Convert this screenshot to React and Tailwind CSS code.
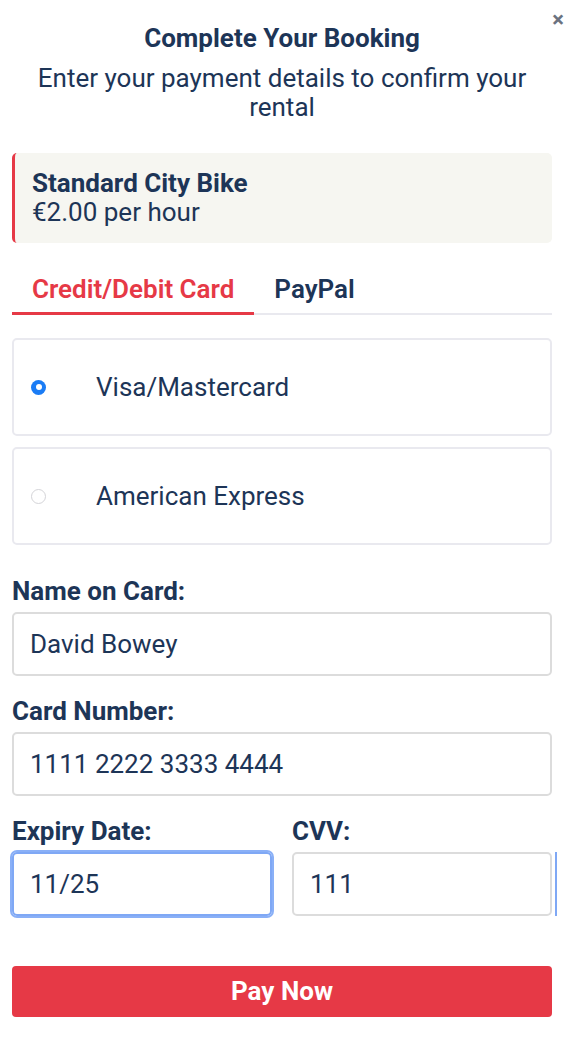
import React, { useState } from "react";

const navy = "text-[#1d3557]";

export default function App() {
  const [tab, setTab] = useState("card");
  const [method, setMethod] = useState("visa");

  return (
    <div className="relative min-h-[1044px] w-[578px] bg-white font-['Roboto',sans-serif] text-[#1d3557]">
      <button className="absolute right-[14px] top-[9px] text-[22px] font-bold leading-none text-[#6b7280]">
        ×
      </button>
      <div className="w-[564px] px-[12px] pt-[22px]">
        <h2 className="text-center text-[26px] font-bold leading-[32px]">Complete Your Booking</h2>
        <p className="mt-[10px] text-center text-[26px] leading-[29px]">
          Enter your payment details to confirm your rental
        </p>

        <div className="mt-[31px] rounded-[5px] border-l-[3px] border-[#e63946] bg-[#f6f6f1] px-[17px] py-[16px]">
          <p className="text-[26px] font-bold leading-[29px]">Standard City Bike</p>
          <p className="text-[26px] leading-[29px]">€2.00 per hour</p>
        </div>

        <div className="mt-[23px] flex border-b-2 border-[#e9e9ef]">
          <TabButton active={tab === "card"} onClick={() => setTab("card")}>
            Credit/Debit Card
          </TabButton>
          <TabButton active={tab === "paypal"} onClick={() => setTab("paypal")}>
            PayPal
          </TabButton>
        </div>

        <div className="mt-[23px] flex flex-col gap-[11px]">
          <Option label="Visa/Mastercard" checked={method === "visa"} onClick={() => setMethod("visa")} />
          <Option label="American Express" checked={method === "amex"} onClick={() => setMethod("amex")} />
        </div>

        <Field label="Name on Card:" value="David Bowey" className="mt-[32px]" />
        <Field label="Card Number:" value="1111 2222 3333 4444" className="mt-[21px]" />

        <div className="mt-[21px] flex gap-[20px]">
          <Field label="Expiry Date:" value="11/25" focused className="flex-1" />
          <div className="relative flex-1">
            <Field label="CVV:" value="111" />
            <span className="absolute bottom-0 right-[-5px] top-[35px] w-[2px] bg-[#7fa8f5]" />
          </div>
        </div>

        <button className="mt-[50px] h-[51px] w-full rounded-[4px] bg-[#e63946] text-[26px] font-bold text-white">
          Pay Now
        </button>
      </div>
    </div>
  );
}

function TabButton({ active, onClick, children }) {
  return (
    <button
      onClick={onClick}
      className={`-mb-[2px] border-b-[3px] px-[20px] pb-[8px] pt-[9px] text-[26px] font-semibold leading-[29px] ${
        active ? "border-[#e63946] text-[#e63946]" : "border-transparent text-[#1d3557]"
      }`}
    >
      {children}
    </button>
  );
}

function Option({ label, checked, onClick }) {
  return (
    <label
      onClick={onClick}
      className="flex h-[98px] cursor-pointer items-center rounded-[5px] border-2 border-[#e9e9ef] pl-[17px]"
    >
      <span
        className={`flex h-[15px] w-[15px] items-center justify-center rounded-full ${
          checked ? "bg-[#1a7cf5]" : "border border-[#d4d4d8] bg-white"
        }`}
      >
        {checked && <span className="h-[6px] w-[6px] rounded-full bg-white" />}
      </span>
      <span className={`ml-[50px] text-[26px] leading-[29px] ${navy}`}>{label}</span>
    </label>
  );
}

function Field({ label, value, focused, className = "" }) {
  return (
    <div className={className}>
      <p className="text-[26px] font-bold leading-[29px]">{label}</p>
      <div
        className={`mt-[6px] flex h-[64px] items-center rounded-[5px] border-2 px-[16px] text-[26px] ${
          focused ? "border-[#7fa8f5] ring-2 ring-[#8ab0f7]" : "border-[#dcdcdc]"
        }`}
      >
        {value}
      </div>
    </div>
  );
}
